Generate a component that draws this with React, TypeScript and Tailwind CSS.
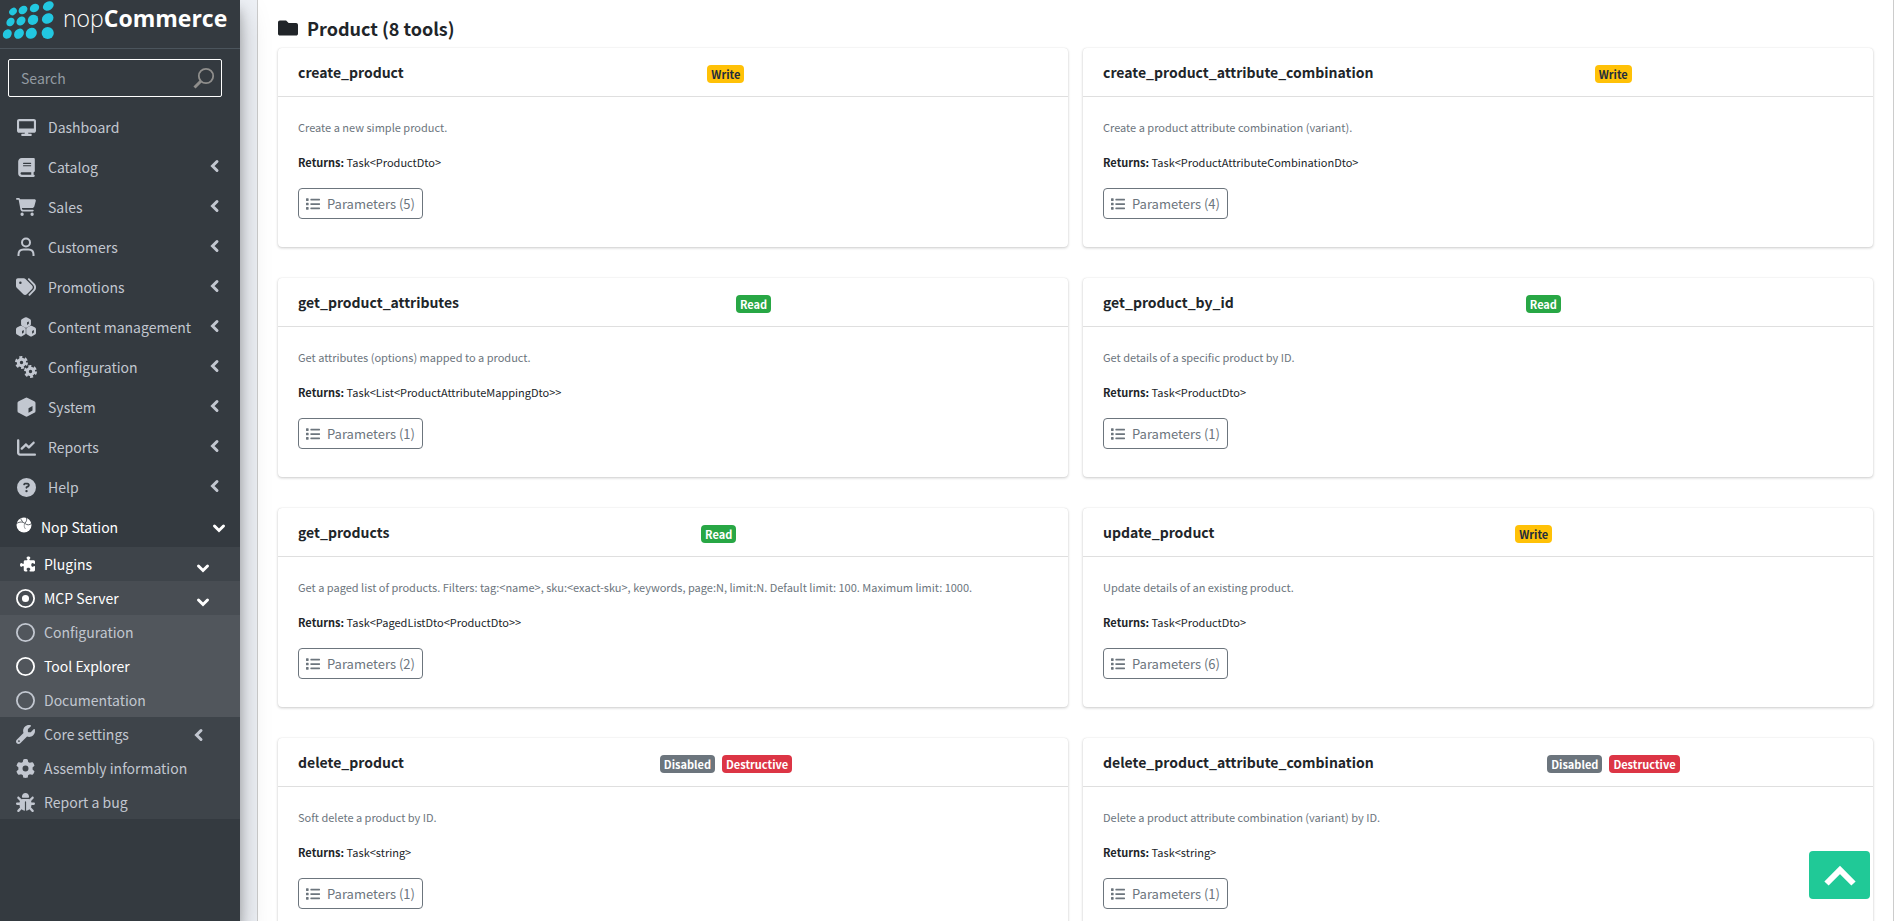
import type { ReactNode } from 'react'
import {
  FaDesktop, FaBook, FaCartShopping, FaTags, FaChartLine, FaCircleQuestion, FaPuzzlePiece,
  FaRegCircleDot, FaRegCircle, FaWrench, FaGear, FaBug,
} from 'react-icons/fa6'
import { FaFolder, FaList } from 'react-icons/fa'

type BadgeKind = 'Write' | 'Read' | 'Disabled' | 'Destructive'

interface Tool {
  name: string
  badges: BadgeKind[]
  description: string
  returns: string
  params: number
}

const tools: Tool[] = [
  { name: 'create_product', badges: ['Write'], description: 'Create a new simple product.', returns: 'Task<ProductDto>', params: 5 },
  { name: 'create_product_attribute_combination', badges: ['Write'], description: 'Create a product attribute combination (variant).', returns: 'Task<ProductAttributeCombinationDto>', params: 4 },
  { name: 'get_product_attributes', badges: ['Read'], description: 'Get attributes (options) mapped to a product.', returns: 'Task<List<ProductAttributeMappingDto>>', params: 1 },
  { name: 'get_product_by_id', badges: ['Read'], description: 'Get details of a specific product by ID.', returns: 'Task<ProductDto>', params: 1 },
  { name: 'get_products', badges: ['Read'], description: 'Get a paged list of products. Filters: tag:<name>, sku:<exact-sku>, keywords, page:N, limit:N. Default limit: 100. Maximum limit: 1000.', returns: 'Task<PagedListDto<ProductDto>>', params: 2 },
  { name: 'update_product', badges: ['Write'], description: 'Update details of an existing product.', returns: 'Task<ProductDto>', params: 6 },
  { name: 'delete_product', badges: ['Disabled', 'Destructive'], description: 'Soft delete a product by ID.', returns: 'Task<string>', params: 1 },
  { name: 'delete_product_attribute_combination', badges: ['Disabled', 'Destructive'], description: 'Delete a product attribute combination (variant) by ID.', returns: 'Task<string>', params: 1 },
]

const badgeColors: Record<BadgeKind, string> = {
  Write: 'bg-[#ffc107] text-[#1f2d3d]',
  Read: 'bg-[#28a745] text-white',
  Disabled: 'bg-[#6c757d] text-white',
  Destructive: 'bg-[#dc3545] text-white',
}

/* Icons */

function UserIcon() {
  return (
    <svg width="18" height="20" viewBox="0 0 18 20" fill="none" stroke="currentColor" strokeWidth="2">
      <circle cx="9" cy="5.5" r="4" />
      <path d="M1.5 19v-1.5c0-3 2-5 5-5h5c3 0 5 2 5 5V19" />
    </svg>
  )
}

function CubeIcon() {
  return (
    <svg width="19" height="20" viewBox="0 0 19 20" fill="currentColor" fillRule="evenodd">
      <path d="M8.3.9a2.4 2.4 0 0 1 2.4 0l6.6 3.3a2 2 0 0 1 1.2 1.9v7.8a2 2 0 0 1-1.2 1.9l-6.6 3.5a2.4 2.4 0 0 1-2.4 0l-6.6-3.5a2 2 0 0 1-1.2-1.9V6.1a2 2 0 0 1 1.2-1.9zM11.5 11.2v4.6l4-2.2V9z" />
    </svg>
  )
}

function CubesIcon() {
  return (
    <svg width="20" height="20" viewBox="0 0 19 19" fill="currentColor" fillRule="evenodd">
      <path d="M8.5.4q1-.5 2 0l2.7 1.4q1 .5 1 1.6v3.600q0 1-1 1.500l-2.700 1.500q-1 .5-2 0L5.800 8.500q-1-.5-1-1.500V3.400q0-1.100 1-1.600zM10.500 5.100v2.400l1.700-1V4.200z" />
      <path d="M3.700 8.500q1-.5 2 0l2.700 1.500q.9.500.9 1.600v3.600q0 1-.9 1.500l-2.700 1.500q-1 .5-2 0L.9 16.700q-.9-.5-.9-1.500v-3.600q0-1.100.9-1.600zM5.700 13.300v2.500l1.700-1v-2.400z" />
      <path d="M13.300 8.500q1-.5 2 0l2.800 1.500q.9.500.9 1.600v3.600q0 1-.9 1.500l-2.800 1.500q-1 .5-2 0l-2.700-1.500q-.9-.5-.9-1.500v-3.600q0-1.100.9-1.600zM15.300 13.300v2.500l1.700-1v-2.400z" />
    </svg>
  )
}

function GearsIcon() {
  return (
    <svg width="22" height="22" viewBox="0 0 22 22" fill="none" stroke="currentColor" className="shrink-0">
      <circle cx="6.5" cy="6.5" r="3.2" strokeWidth="3" />
      <circle cx="6.5" cy="6.5" r="5.200" strokeWidth="2.600" strokeDasharray="2.900 2.545" />
      <circle cx="15.5" cy="15.5" r="3.2" strokeWidth="3" />
      <circle cx="15.5" cy="15.5" r="5.200" strokeWidth="2.600" strokeDasharray="2.900 2.545" />
    </svg>
  )
}

function BallIcon() {
  return (
    <svg width="16" height="16" viewBox="0 0 16 16">
      <circle cx="8" cy="8" r="7.5" fill="#fff" />
      <path d="M.5 6.5C4 4.5 6.5 4.500 9 6.500s4.500 1.500 6.500 0M9 6c1.500-1.500 2-3 1.500-5.500M5 1.500c0 1.500.5 2.500 2 3" stroke="#343a40" strokeWidth=".8" fill="none" />
      <path d="M8.500 6.500c-.5 2.500-.3 4 1 5.500" stroke="#343a40" strokeWidth=".5" fill="none" />
    </svg>
  )
}

function SearchIcon() {
  return (
    <svg width="22" height="22" viewBox="0 0 22 22" fill="none" stroke="#8f8e8c">
      <circle cx="13" cy="9" r="7.2" strokeWidth="1.8" />
      <path d="M8 14l-6.5 6.5" strokeWidth="3" />
    </svg>
  )
}

function AngleLeft() {
  return (
    <svg width="10" height="14" viewBox="0 0 10 14" fill="none" stroke="currentColor" strokeWidth="3" strokeLinecap="round">
      <path d="M7 2.500L2.500 7 7 11.500" />
    </svg>
  )
}

function AngleDown() {
  return (
    <svg width="14" height="10" viewBox="0 0 14 10" fill="none" stroke="currentColor" strokeWidth="3" strokeLinecap="round">
      <path d="M2.500 3L7 7.500 11.500 3" />
    </svg>
  )
}

function Logo() {
  return (
    <a href="#" className="flex h-[49px] items-start gap-px border-b border-[#4b545c] text-white">
      <svg width="62" height="42" viewBox="0 0 62 42" fill="#22c7e0" className="shrink-0">
        <ellipse cx="13" cy="11.5" rx="4.2" ry="3.3" transform="rotate(-42 13 11.5)" />
        <ellipse cx="23" cy="10" rx="4.8" ry="3.8" transform="rotate(-38 23 10)" />
        <ellipse cx="34.5" cy="8" rx="5" ry="4" transform="rotate(-35 34.5 8)" />
        <ellipse cx="48.3" cy="6" rx="5.7" ry="4.3" transform="rotate(-30 48.3 6)" />
        <ellipse cx="10.5" cy="22" rx="4.6" ry="3.7" transform="rotate(-48 10.5 22)" />
        <ellipse cx="21" cy="21" rx="5" ry="4" transform="rotate(-45 21 21)" />
        <ellipse cx="33" cy="19.8" rx="5.5" ry="4.8" transform="rotate(-40 33 19.8)" />
        <ellipse cx="47.7" cy="18.5" rx="6" ry="5" transform="rotate(-30 47.7 18.5)" />
        <ellipse cx="7.3" cy="34" rx="5" ry="4.2" transform="rotate(-55 7.3 34)" />
        <ellipse cx="19" cy="33.7" rx="5.5" ry="4.5" transform="rotate(-50 19 33.7)" />
        <ellipse cx="31.3" cy="33.3" rx="5.9" ry="5.2" transform="rotate(-45 31.3 33.3)" />
        <circle cx="47.7" cy="33" r="6.1" />
      </svg>
      <span className="font-['Open_Sans',sans-serif] text-[23px] leading-[36px]">
        <span className="font-light">nop</span>
        <span className="font-bold">Commerce</span>
      </span>
    </a>
  )
}

/* Sidebar */

function MenuItem({ icon, label, arrow = true }: { icon: ReactNode, label: string, arrow?: boolean }) {
  return (
    <li>
      <a href="#" className="flex h-10 items-center pl-4 pr-5 text-[#c2c7d0]">
        <span className="flex w-5 justify-center text-[19px]">{icon}</span>
        <span className="ml-3 flex-1 whitespace-nowrap">{label}</span>
        {arrow && <span className="pb-[2px]"><AngleLeft /></span>}
      </a>
    </li>
  )
}

function SubItem({ icon, label, active, arrow }: { icon: ReactNode, label: string, active?: boolean, arrow?: ReactNode }) {
  return (
    <a href="#" className={`flex h-[34px] items-center pl-4 pr-[30px] ${active ? 'text-white' : 'text-[#c2c7d0]'}`}>
      <span className="flex w-[19px] justify-center text-[19px]">{icon}</span>
      <span className="ml-[9px] flex-1 whitespace-nowrap">{label}</span>
      {arrow}
    </a>
  )
}

function Sidebar() {
  return (
    <aside className="relative z-10 h-full w-60 shrink-0 bg-[#343a40] text-[14px] shadow-[0_14px_28px_rgba(0,0,0,0.25),0_10px_10px_rgba(0,0,0,0.22)]">
      <Logo />
      <div className="px-2 py-[10px]">
        <label className="flex h-[38px] w-[214px] items-center rounded-xs border border-white pl-3 pr-[6px]">
          <input type="search" aria-label="Search" placeholder="Search" className="min-w-0 flex-1 bg-transparent text-white outline-none placeholder:text-[#939ba2]" />
          <SearchIcon />
        </label>
      </div>
      <nav>
        <ul>
          <MenuItem icon={<FaDesktop />} label="Dashboard" arrow={false} />
          <MenuItem icon={<FaBook />} label="Catalog" />
          <MenuItem icon={<FaCartShopping className="text-[20px]" />} label="Sales" />
          <MenuItem icon={<UserIcon />} label="Customers" />
          <MenuItem icon={<FaTags className="text-[20px]" />} label="Promotions" />
          <MenuItem icon={<CubesIcon />} label="Content management" />
          <MenuItem icon={<GearsIcon />} label="Configuration" />
          <MenuItem icon={<CubeIcon />} label="System" />
          <MenuItem icon={<FaChartLine />} label="Reports" />
          <MenuItem icon={<FaCircleQuestion />} label="Help" />
          <li>
            <a href="#" className="flex h-10 items-center pl-4 pr-[14px] text-white">
              <span className="pb-1"><BallIcon /></span>
              <span className="ml-[9px] flex-1">Nop Station</span>
              <span className="pt-[2px]"><AngleDown /></span>
            </a>
            <ul className="bg-white/5">
              <li>
                <SubItem
                  icon={<FaPuzzlePiece className="ml-1 -scale-x-100 text-[16px]" />}
                  label="Plugins"
                  active
                  arrow={<span className="pt-2"><AngleDown /></span>}
                />
              </li>
              <li className="bg-white/5">
                <SubItem icon={<FaRegCircleDot />} label="MCP Server" active arrow={<span className="pt-2"><AngleDown /></span>} />
                <ul className="bg-white/5">
                  <li><SubItem icon={<FaRegCircle />} label="Configuration" /></li>
                  <li><SubItem icon={<FaRegCircle />} label="Tool Explorer" active /></li>
                  <li><SubItem icon={<FaRegCircle />} label="Documentation" /></li>
                </ul>
              </li>
              <li><SubItem icon={<FaWrench />} label="Core settings" arrow={<span className="pr-[6px] pt-[2px]"><AngleLeft /></span>} /></li>
              <li><SubItem icon={<FaGear />} label="Assembly information" /></li>
              <li><SubItem icon={<FaBug />} label="Report a bug" /></li>
            </ul>
          </li>
        </ul>
      </nav>
    </aside>
  )
}

function ToolCard({ tool }: { tool: Tool }) {
  return (
    <article className="rounded bg-white shadow-[0_0_1px_rgba(0,0,0,0.125),0_1px_3px_rgba(0,0,0,0.2)]">
      {/* the empty pseudo element keeps the badges near the middle */}
      <header className="flex h-[49px] items-center justify-between border-b border-black/[0.125] px-5 after:content-['']">
        <h3 className="text-[14px] font-bold">{tool.name}</h3>
        <div className="flex gap-[7px] pt-[3px]">
          {tool.badges.map((badge) => (
            <span key={badge} className={`h-[18px] rounded px-1 text-[11px] font-bold leading-[18px] ${badgeColors[badge]}`}>
              {badge}
            </span>
          ))}
        </div>
      </header>
      <div className="flex flex-col items-start gap-4 px-5 pb-7 pt-[21px]">
        <p className="text-[11px] leading-[19px] text-[#6c757d]">{tool.description}</p>
        <p className="text-[11px] leading-[19px]"><strong>Returns:</strong> {tool.returns}</p>
        <button type="button" className="flex h-[31px] items-center gap-[7px] rounded border border-[#6c757d] px-[7px] text-[13px] text-[#6c757d]">
          <FaList className="text-[14px]" />
          Parameters ({tool.params})
        </button>
      </div>
    </article>
  )
}

export default function App() {
  return (
    <div className="flex h-screen overflow-hidden bg-[#eef1f6] font-['Source_Sans_Pro','Noto_Sans_CJK_SC',sans-serif] text-[#212529]">
      <Sidebar />
      <main className="ml-[17px] min-w-0 flex-1">
        <section className="border-x border-black/20 bg-white px-5 pb-8 pt-4">
          <h2 className="mb-2 flex h-6 items-center gap-[9px] text-[18px] font-bold">
            <FaFolder className="text-[20px]" />
            Product (8 tools)
          </h2>
          <div className="grid grid-cols-2 gap-x-[15px] gap-y-[31px]">
            {tools.map((tool) => (
              <ToolCard key={tool.name} tool={tool} />
            ))}
          </div>
        </section>
      </main>
      <button type="button" aria-label="Back to top" className="fixed bottom-[22px] right-6 z-20 flex h-12 w-[61px] items-center justify-center rounded-sm bg-[#20c997]">
        <svg width="32" height="21" viewBox="0 0 32 21" fill="none" stroke="#fff" strokeWidth="6">
          <path d="M2.5 18.5L16 5l13.5 13.5" />
        </svg>
      </button>
    </div>
  )
}
